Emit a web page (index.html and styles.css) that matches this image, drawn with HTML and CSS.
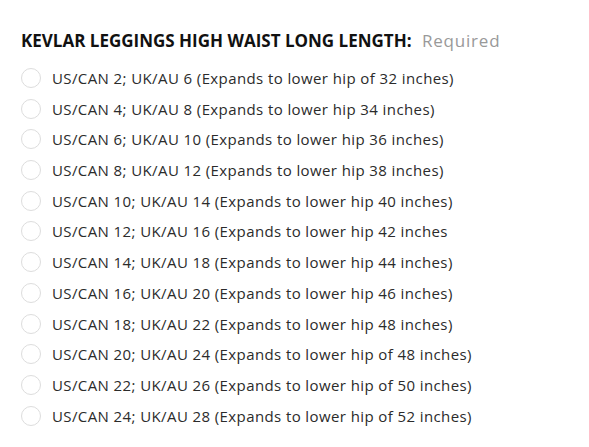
FILE: index.html
```html
<!DOCTYPE html>
<html lang="en">
<head>
    <meta charset="UTF-8">
    <title>Kevlar Leggings - Size</title>
    <meta name="viewport" content="width=device-width, initial-scale=1.0">
    <link rel="stylesheet" href="styles.css">
</head>
<body>
<div class="option-group">
    <div class="option-title">KEVLAR LEGGINGS HIGH WAIST LONG LENGTH: <span class="required">Required</span></div>
    <ul class="option-list">
        <li><label><input type="radio" name="size"><span>US/CAN 2; UK/AU 6 (Expands to lower hip of 32 inches)</span></label></li>
        <li><label><input type="radio" name="size"><span>US/CAN 4; UK/AU 8 (Expands to lower hip 34 inches)</span></label></li>
        <li><label><input type="radio" name="size"><span>US/CAN 6; UK/AU 10 (Expands to lower hip 36 inches)</span></label></li>
        <li><label><input type="radio" name="size"><span>US/CAN 8; UK/AU 12 (Expands to lower hip 38 inches)</span></label></li>
        <li><label><input type="radio" name="size"><span>US/CAN 10; UK/AU 14 (Expands to lower hip 40 inches)</span></label></li>
        <li><label><input type="radio" name="size"><span>US/CAN 12; UK/AU 16 (Expands to lower hip 42 inches</span></label></li>
        <li><label><input type="radio" name="size"><span>US/CAN 14; UK/AU 18 (Expands to lower hip 44 inches)</span></label></li>
        <li><label><input type="radio" name="size"><span>US/CAN 16; UK/AU 20 (Expands to lower hip 46 inches)</span></label></li>
        <li><label><input type="radio" name="size"><span>US/CAN 18; UK/AU 22 (Expands to lower hip 48 inches)</span></label></li>
        <li><label><input type="radio" name="size"><span>US/CAN 20; UK/AU 24 (Expands to lower hip of 48 inches)</span></label></li>
        <li><label><input type="radio" name="size"><span>US/CAN 22; UK/AU 26 (Expands to lower hip of 50 inches)</span></label></li>
        <li><label><input type="radio" name="size"><span>US/CAN 24; UK/AU 28 (Expands to lower hip of 52 inches)</span></label></li>
    </ul>
</div>
</body>
</html>
```

FILE: styles.css
```css
body {
    font-family: "Open Sans", Arial, sans-serif;
    background: #fff;
    margin: 0;
}
.option-group {
    padding: 30px 21px 0;
}
.option-title {
    font-size: 17px;
    font-weight: 700;
    color: #111;
    line-height: 22px;
}
.required {
    font-weight: 400;
    color: #999;
    margin-left: 6px;
    font-size: 17px;
    letter-spacing: 0.8px;
}
.option-list {
    list-style: none;
    margin: 16px 0 0;
    padding: 0;
}
.option-list li {
    height: 30.7px;
}
.option-list label {
    display: flex;
    align-items: center;
    gap: 11px;
    height: 20px;
    font-size: 15px;
    letter-spacing: 0.4px;
    color: #2b2b2b;
}
.option-list input {
    appearance: none;
    width: 20px;
    height: 20px;
    margin: 0;
    border: 1px solid #ddd;
    border-radius: 50%;
    background: #fff;
}
```
